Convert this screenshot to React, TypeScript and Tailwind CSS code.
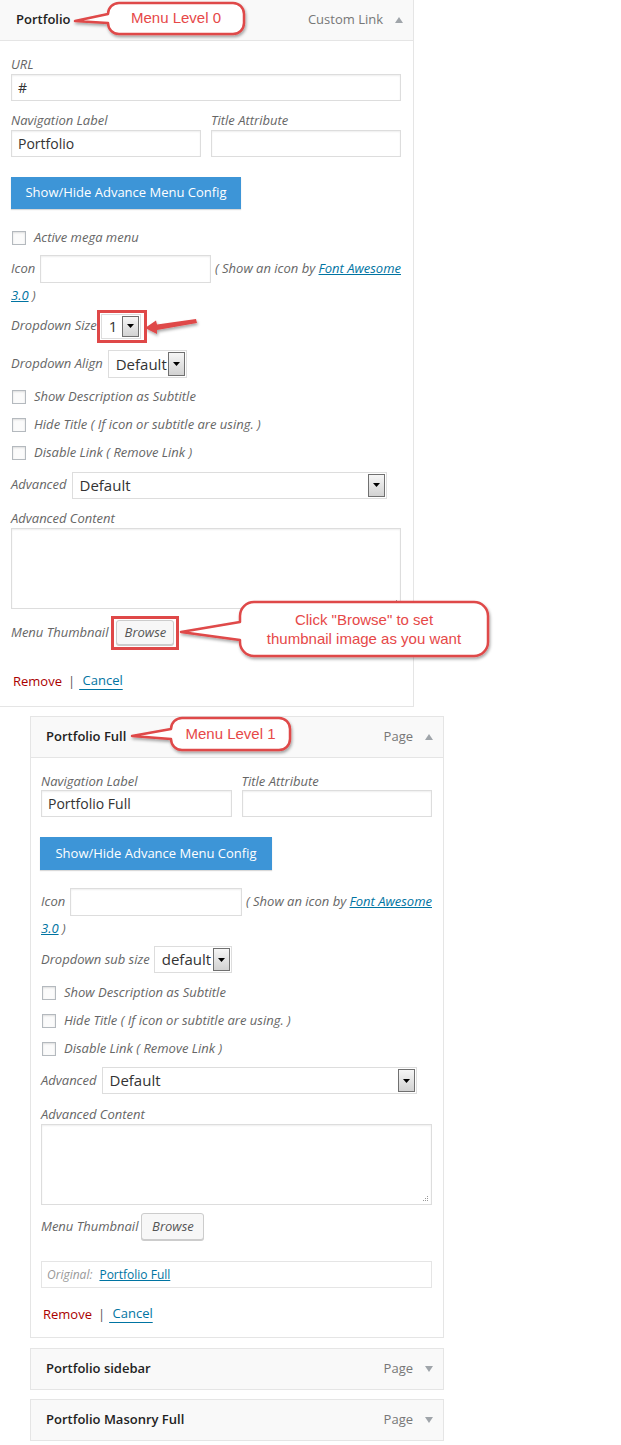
import React from "react";

const Label = ({ children, className = "" }: { children: React.ReactNode; className?: string }) => (
  <div className={`text-[13px] italic leading-[18px] text-[#666] ${className}`}>{children}</div>
);

const TextBox = ({ value = "", className = "" }: { value?: string; className?: string }) => (
  <div
    className={`flex items-center border border-[#ddd] bg-white px-[6px] text-[14px] text-[#333] shadow-[inset_0_1px_2px_rgba(0,0,0,0.07)] ${className}`}
  >
    {value}
  </div>
);

const ArrowBtn = () => (
  <div className="flex w-[17px] shrink-0 items-center justify-center border border-[#707070] bg-linear-to-b from-[#f6f6f6] to-[#d2d2d2]">
    <svg width="7" height="4" viewBox="0 0 7 4">
      <path d="M0 0h7L3.5 4z" fill="#000" />
    </svg>
  </div>
);

const Select = ({ value, className = "", textClass = "" }: { value: string; className?: string; textClass?: string }) => (
  <div className={`flex shrink-0 items-stretch border border-[#ddd] bg-white p-[1px] ${className}`}>
    <div className={`flex flex-1 items-center pl-[6px] text-[15px] text-[#333] ${textClass}`}>{value}</div>
    <ArrowBtn />
  </div>
);

const Check = ({ label, className = "" }: { label: string; className?: string }) => (
  <div className={`flex h-[20px] items-center ${className}`}>
    <span className="ml-[1px] h-[14px] w-[14px] border border-[#b4b9be] bg-[#fbfbfb] shadow-[inset_0_1px_2px_rgba(0,0,0,0.12)]" />
    <span className="ml-[8px] text-[13px] italic text-[#666]">{label}</span>
  </div>
);

const UpTri = () => (
  <svg width="8" height="6" viewBox="0 0 8 6">
    <path d="M0 6L4 0L8 6z" fill="#a0a5aa" />
  </svg>
);
const DownTri = () => (
  <svg width="8" height="6" viewBox="0 0 8 6">
    <path d="M0 0L8 0L4 6z" fill="#a0a5aa" />
  </svg>
);

const Header = ({ title, kind, open, pl }: { title: string; kind: string; open: boolean; pl: string }) => (
  <div className={`flex h-[41px] items-center justify-between border-b border-[#e5e5e5] bg-[#f9f9f9] pr-[10px] ${pl}`}>
    <span className="text-[13px] font-semibold text-[#222]">{title}</span>
    <span className="flex items-center gap-[12px] text-[13px] text-[#777]">
      {kind}
      {open ? <UpTri /> : <DownTri />}
    </span>
  </div>
);

const Grip = () => (
  <svg className="absolute bottom-[2px] right-[2px]" width="8" height="8" viewBox="0 0 8 8">
    <rect x="6" y="2" width="1" height="1" fill="#999" />
    <rect x="4" y="4" width="1" height="1" fill="#999" />
    <rect x="6" y="4" width="1" height="1" fill="#999" />
    <rect x="2" y="6" width="1" height="1" fill="#999" />
    <rect x="4" y="6" width="1" height="1" fill="#999" />
    <rect x="6" y="6" width="1" height="1" fill="#999" />
  </svg>
);

const IconRow = () => (
  <>
    <div className="flex h-[28px] items-center">
      <span className="text-[13px] italic text-[#666]">Icon</span>
      <div className="ml-[5px] h-[28px] w-[172px] border border-[#ddd] bg-white shadow-[inset_0_1px_2px_rgba(0,0,0,0.07)]" />
      <span className="ml-[4px] whitespace-nowrap text-[13px] italic text-[#666]">
        ( Show an icon by <span className="text-[#0074a2] underline">Font Awesome</span>
      </span>
    </div>
    <div className="mt-[3px] text-[13px] italic leading-[18px] text-[#666]">
      <span className="text-[#0074a2] underline">3.0</span> )
    </div>
  </>
);

const Actions = ({ className = "" }: { className?: string }) => (
  <div className={`flex items-center text-[13px] leading-[18px] ${className}`}>
    <span className="ml-[2px] text-[#a00]">Remove</span>
    <span className="ml-[6px] text-[#555]">|</span>
    <span className="ml-[4px] pb-[1px] text-[#0074a2] underline underline-offset-[4px]">&nbsp;Cancel</span>
  </div>
);

const BlueBtn = ({ className = "" }: { className?: string }) => (
  <div
    className={`flex items-center justify-center bg-[#3d95d7] text-[13px] text-white shadow-[0_1px_1px_rgba(0,0,0,0.15)] ${className}`}
  >
    Show/Hide Advance Menu Config
  </div>
);

const Browse = ({ className = "" }: { className?: string }) => (
  <div
    className={`flex items-center justify-center rounded-[3px] border border-[#ccc] bg-[#f7f7f7] text-[13px] italic text-[#555] shadow-[0_1px_0_#ccc] ${className}`}
  >
    Browse
  </div>
);

export default function App() {
  return (
    <div className="relative min-h-[1445px] w-[621px] bg-white font-['Open_Sans',sans-serif]">
      {/* Panel 1 */}
      <div className="w-[414px] border-r border-b border-[#e5e5e5] bg-white">
        <Header title="Portfolio" kind="Custom Link" open pl="pl-[16px]" />
        <div className="pl-[11px] pr-[12px] pb-[16px]">
          <Label className="mt-[14px]">URL</Label>
          <TextBox value="#" className="mt-[1px] h-[27px]" />
          <div className="mt-[10px] grid grid-cols-2 gap-x-[10px]">
            <div>
              <Label>Navigation Label</Label>
              <TextBox value="Portfolio" className="mt-[1px] h-[27px]" />
            </div>
            <div>
              <Label>Title Attribute</Label>
              <TextBox className="mt-[1px] h-[27px]" />
            </div>
          </div>
          <BlueBtn className="mt-[20px] h-[32px] w-[230px]" />
          <Check label="Active mega menu" className="mt-[19px]" />
          <div className="mt-[7px]">
            <IconRow />
          </div>
          <div className="mt-[10px] flex h-[24px] items-center">
            <span className="text-[13px] italic text-[#666]">Dropdown Size</span>
            <Select value="1" className="ml-[4px] h-[25px] w-[40px]" />
          </div>
          <div className="mt-[12px] flex h-[28px] items-center">
            <span className="text-[13px] italic text-[#666]">Dropdown Align</span>
            <Select value="Default" className="ml-[5px] h-[28px] w-[79px]" />
          </div>
          <Check label="Show Description as Subtitle" className="mt-[9px]" />
          <Check label="Hide Title ( If icon or subtitle are using. )" className="mt-[8px]" />
          <Check label="Disable Link ( Remove Link )" className="mt-[8px]" />
          <div className="mt-[9px] flex h-[26px] items-center">
            <span className="text-[13px] italic text-[#666]">Advanced</span>
            <Select value="Default" className="ml-[5px] h-[27px] w-[315px]" />
          </div>
          <Label className="mt-[11px]">Advanced Content</Label>
          <div className="relative mt-[1px] h-[81px] border border-[#ddd] bg-white shadow-[inset_0_1px_2px_rgba(0,0,0,0.07)]">
            <Grip />
          </div>
          <div className="mt-[11px] flex h-[25px] items-center">
            <span className="text-[13px] italic text-[#666]">Menu Thumbnail</span>
            <Browse className="ml-[8px] h-[25px] w-[58px]" />
          </div>
          <Actions className="mt-[26px]" />
        </div>
      </div>

      {/* Panel 2 */}
      <div className="ml-[30px] mt-[9px] w-[414px] border border-[#e5e5e5] bg-white">
        <Header title="Portfolio Full" kind="Page" open pl="pl-[15px]" />
        <div className="pl-[10px] pr-[11px] pb-[14px]">
          <div className="mt-[14px] grid grid-cols-2 gap-x-[10px]">
            <div>
              <Label>Navigation Label</Label>
              <TextBox value="Portfolio Full" className="h-[27px]" />
            </div>
            <div>
              <Label>Title Attribute</Label>
              <TextBox className="h-[27px]" />
            </div>
          </div>
          <BlueBtn className="mt-[20px] -ml-[1px] h-[33px] w-[232px]" />
          <div className="mt-[18px]">
            <IconRow />
          </div>
          <div className="mt-[9px] flex h-[27px] items-center">
            <span className="text-[13px] italic text-[#666]">Dropdown sub size</span>
            <Select value="default" className="ml-[4px] h-[27px] w-[78px]" />
          </div>
          <Check label="Show Description as Subtitle" className="mt-[10px]" />
          <Check label="Hide Title ( If icon or subtitle are using. )" className="mt-[8px]" />
          <Check label="Disable Link ( Remove Link )" className="mt-[8px]" />
          <div className="mt-[8px] flex h-[27px] items-center">
            <span className="text-[13px] italic text-[#666]">Advanced</span>
            <Select value="Default" className="ml-[5px] h-[27px] w-[315px]" />
          </div>
          <Label className="mt-[11px]">Advanced Content</Label>
          <div className="relative mt-[1px] h-[81px] border border-[#ddd] bg-white shadow-[inset_0_1px_2px_rgba(0,0,0,0.07)]">
            <Grip />
          </div>
          <div className="mt-[8px] flex h-[27px] items-center">
            <span className="text-[13px] italic text-[#666]">Menu Thumbnail</span>
            <Browse className="ml-[3px] h-[27px] w-[63px]" />
          </div>
          <div className="mt-[21px] flex h-[27px] items-center border border-[#e5e5e5] pl-[5px] text-[12px]">
            <span className="italic text-[#999]">Original:</span>
            <span className="ml-[7px] text-[#0074a2] underline">Portfolio Full</span>
          </div>
          <Actions className="mt-[16px]" />
        </div>
      </div>

      {/* Panel 3 */}
      <div className="ml-[30px] mt-[10px] w-[414px] border border-[#e5e5e5]">
        <div className="flex h-[40px] items-center justify-between bg-[#f9f9f9] pl-[15px] pr-[10px]">
          <span className="text-[13px] font-semibold text-[#222]">Portfolio sidebar</span>
          <span className="flex items-center gap-[12px] text-[13px] text-[#777]">
            Page
            <DownTri />
          </span>
        </div>
      </div>

      {/* Panel 4 */}
      <div className="ml-[30px] mt-[9px] w-[414px] border border-[#e5e5e5]">
        <div className="flex h-[40px] items-center justify-between bg-[#f9f9f9] pl-[15px] pr-[10px]">
          <span className="text-[13px] font-semibold text-[#222]">Portfolio Masonry Full</span>
          <span className="flex items-center gap-[12px] text-[13px] text-[#777]">
            Page
            <DownTri />
          </span>
        </div>
      </div>

      {/* Annotations */}
      <svg className="pointer-events-none absolute left-0 top-0" width="621" height="1445" viewBox="0 0 621 1445">
        <defs>
          <filter id="sh" x="-20%" y="-20%" width="140%" height="160%">
            <feDropShadow dx="1" dy="2" stdDeviation="1.5" floodColor="#000" floodOpacity="0.35" />
          </filter>
        </defs>
        <g fill="#fff" stroke="#df4848" strokeWidth="2.5" strokeLinejoin="round" filter="url(#sh)">
          <path d="M119 3H233A11 11 0 0 1 244 14V23A11 11 0 0 1 233 34H119A11 11 0 0 1 108 23L75 21L108 14A11 11 0 0 1 119 3Z" />
          <path d="M254 602H474A14 14 0 0 1 488 616V642A14 14 0 0 1 474 656H254A14 14 0 0 1 240 642L240 640L181 632L240 622V616A14 14 0 0 1 254 602Z" />
          <path d="M182 718H279A11 11 0 0 1 290 729V739A11 11 0 0 1 279 750H182A11 11 0 0 1 171 739L132 736L171 729A11 11 0 0 1 182 718Z" />
        </g>
        <g filter="url(#sh)">
          <path d="M196 319L157 324.5L156 320.5L145 328L157 334L157 330L197 323Z" fill="#df4848" />
        </g>
        <rect x="98.5" y="311.5" width="47" height="30" fill="none" stroke="#df4848" strokeWidth="3" />
        <rect x="112.5" y="617.5" width="65" height="31" fill="none" stroke="#df4848" strokeWidth="3" />
      </svg>
      <div className="pointer-events-none absolute left-[108px] top-[3px] flex h-[31px] w-[136px] items-center justify-center font-['Liberation_Sans',Arial,sans-serif] text-[15px] text-[#e64848]">
        Menu Level 0
      </div>
      <div className="pointer-events-none absolute left-[240px] top-[602px] flex h-[54px] w-[248px] flex-col items-center justify-center font-['Liberation_Sans',Arial,sans-serif] text-[15px] leading-[19px] text-[#e64848]">
        <span>Click "Browse" to set</span>
        <span>thumbnail image as you want</span>
      </div>
      <div className="pointer-events-none absolute left-[171px] top-[718px] flex h-[32px] w-[119px] items-center justify-center font-['Liberation_Sans',Arial,sans-serif] text-[15px] text-[#e64848]">
        Menu Level 1
      </div>
    </div>
  );
}
